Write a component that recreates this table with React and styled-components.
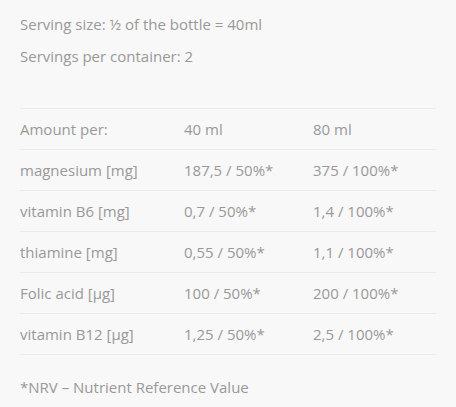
import React from "react";
import styled, { createGlobalStyle } from "styled-components";

const Global = createGlobalStyle`
  html, body { margin: 0; padding: 0; background: #f8f8f8; }
  body { font-family: "Open Sans", "Liberation Sans", sans-serif; }
`;

const Page = styled.div`
  padding: 13px 20px 0 20px;
  color: #999;
  font-size: 15px;
`;

const Line = styled.p`
  margin: 0 0 10px 0;
  line-height: 22px;
`;

const Table = styled.div`
  margin-top: 41px;
  border-top: 1px solid #ebebeb;
`;

const Row = styled.div`
  display: grid;
  grid-template-columns: 164px 129px 1fr;
  height: 40px;
  align-items: center;
  border-bottom: 1px solid #ebebeb;
`;

const Cell = styled.div`
  white-space: nowrap;
`;

const Note = styled.p`
  margin: 21px 0 0 0;
  line-height: 22px;
`;

const rows = [
  ["Amount per:", "40 ml", "80 ml"],
  ["magnesium [mg]", "187,5 / 50%*", "375 / 100%*"],
  ["vitamin B6 [mg]", "0,7 / 50%*", "1,4 / 100%*"],
  ["thiamine [mg]", "0,55 / 50%*", "1,1 / 100%*"],
  ["Folic acid [µg]", "100 / 50%*", "200 / 100%*"],
  ["vitamin B12 [µg]", "1,25 / 50%*", "2,5 / 100%*"],
];

export default function App() {
  return (
    <>
      <Global />
      <Page>
        <Line>Serving size: ½ of the bottle = 40ml</Line>
        <Line>Servings per container: 2</Line>
        <Table>
          {rows.map((r) => (
            <Row key={r[0]}>
              {r.map((c, i) => (
                <Cell key={i}>{c}</Cell>
              ))}
            </Row>
          ))}
        </Table>
        <Note>*NRV – Nutrient Reference Value</Note>
      </Page>
    </>
  );
}
